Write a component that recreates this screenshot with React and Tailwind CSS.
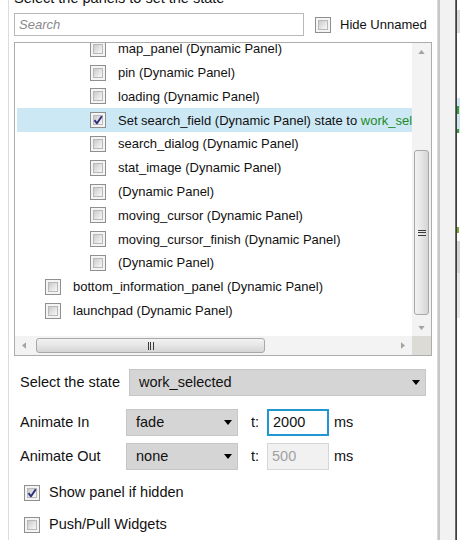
import React from 'react';

const rows = [
    { level: 2, name: 'map_panel (Dynamic Panel)' },
    { level: 2, name: 'pin (Dynamic Panel)' },
    { level: 2, name: 'loading (Dynamic Panel)' },
    { level: 2, name: 'Set search_field (Dynamic Panel) state to ', extra: 'work_selected', checked: true, selected: true },
    { level: 2, name: 'search_dialog (Dynamic Panel)' },
    { level: 2, name: 'stat_image (Dynamic Panel)' },
    { level: 2, name: '(Dynamic Panel)' },
    { level: 2, name: 'moving_cursor (Dynamic Panel)' },
    { level: 2, name: 'moving_cursor_finish (Dynamic Panel)' },
    { level: 2, name: '(Dynamic Panel)' },
    { level: 1, name: 'bottom_information_panel (Dynamic Panel)' },
    { level: 1, name: 'launchpad (Dynamic Panel)' },
];

function CheckBox({ checked }) {
    return (
        <div className="w-[16px] h-[16px] shrink-0 border border-[#8e8f8f] bg-[#f4f4f4] p-[2px]">
            <div className="relative w-full h-full border border-[#b9b9b9] bg-gradient-to-br from-[#c9c9c9] via-[#e2e2e2] to-[#f8f8f8]">
                {checked && (
                    <svg viewBox="0 0 10 10" className="absolute -left-[1px] -top-[1px] w-[10px] h-[10px]">
                        <path d="M1.5 5.2 L4 8.3 L8.8 1.2" fill="none" stroke="#2d2f7e" strokeWidth="1.9" strokeLinejoin="round" />
                    </svg>
                )}
            </div>
        </div>
    );
}

function Triangle({ dir, className }) {
    const pts = {
        up: '0,5 4,0 8,5',
        down: '0,0 8,0 4,5',
        left: '5,0 5,8 0,4',
        right: '0,0 0,8 5,4',
    }[dir];
    const box = dir === 'up' || dir === 'down' ? '0 0 8 5' : '0 0 5 8';
    return (
        <svg viewBox={box} className={className}>
            <polygon points={pts} fill="currentColor" />
        </svg>
    );
}

function Select({ value, width }) {
    return (
        <div className={`${width} h-[27px] flex items-center justify-between bg-[#d5d5d5] border border-[#c6c6c6] pl-[9px] pr-[5px]`}>
            <span>{value}</span>
            <Triangle dir="down" className="w-[8px] h-[5px] text-black" />
        </div>
    );
}

export default function App() {
    return (
        <div className="w-[460px] h-[540px] overflow-hidden bg-white flex font-['Liberation_Sans',Arial,sans-serif] text-[#111]">
            {/* left gutter */}
            <div className="w-[9px] shrink-0 bg-white border-r border-[#dcdcdc]"></div>

            {/* main panel */}
            <div className="w-[428px] shrink-0 pl-[5px]">
                <div className="h-[13px] overflow-hidden">
                    <div className="relative -top-[10px] text-[14.5px] leading-[17px] whitespace-nowrap">Select the panels to set the state</div>
                </div>

                <div className="flex items-center h-[23px]">
                    <div className="w-[290px] h-[23px] border border-[#b8b8b8] flex items-center pl-[4px]">
                        <span className="italic text-[13px] text-[#8a8a8a]">Search</span>
                    </div>
                    <div className="ml-[11px]"><CheckBox /></div>
                    <span className="ml-[9px] text-[13px]">Hide Unnamed</span>
                </div>

                {/* tree list */}
                <div className="mt-[6px] w-[418px] h-[314px] border border-[#acacac] flex flex-col">
                    <div className="flex h-[293px]">
                        <div className="flex-1 overflow-hidden pl-[2px] text-[13px]">
                            <div className="relative -top-[6px]">
                                {rows.map((r, i) => (
                                    <div
                                        key={i}
                                        className={`h-[23.8px] flex items-center whitespace-nowrap ${r.selected ? 'bg-[#cce8f5]' : ''} ${r.level === 2 ? 'pl-[73px]' : 'pl-[28px]'}`}
                                    >
                                        <CheckBox checked={r.checked} />
                                        <span className="ml-[12px]">
                                            {r.name}
                                            {r.extra && <span className="text-[#1f8a1f]">{r.extra}</span>}
                                        </span>
                                    </div>
                                ))}
                            </div>
                        </div>
                        {/* vertical scrollbar */}
                        <div className="w-[19px] bg-[#f3f3f3] flex flex-col items-center">
                            <div className="h-[17px] flex items-center justify-center">
                                <Triangle dir="up" className="w-[7px] h-[4px] text-[#a3a3a3]" />
                            </div>
                            <div className="flex-1 w-full px-[2px]">
                                <div className="mt-[90px] h-[165px] rounded-[3px] border border-[#a8a8a8] bg-gradient-to-r from-[#f2f2f2] via-[#e6e6e6] to-[#d4d4d4] flex flex-col items-center justify-center gap-[1.5px]">
                                    <div className="w-[8px] h-[1px] bg-[#3a3a3a]"></div>
                                    <div className="w-[8px] h-[1px] bg-[#3a3a3a]"></div>
                                    <div className="w-[8px] h-[1px] bg-[#3a3a3a]"></div>
                                </div>
                            </div>
                            <div className="h-[17px] flex items-center justify-center">
                                <Triangle dir="down" className="w-[7px] h-[4px] text-[#a3a3a3]" />
                            </div>
                        </div>
                    </div>
                    <div className="flex h-[19px]">
                        {/* horizontal scrollbar */}
                        <div className="flex-1 bg-[#f3f3f3] flex items-center">
                            <div className="w-[18px] flex items-center justify-center">
                                <Triangle dir="left" className="w-[4px] h-[7px] text-[#a3a3a3]" />
                            </div>
                            <div className="ml-[3px] w-[229px] h-[15px] rounded-[3px] border border-[#a8a8a8] bg-gradient-to-b from-[#f2f2f2] via-[#e6e6e6] to-[#d4d4d4] flex items-center justify-center gap-[1.5px]">
                                <div className="w-[1px] h-[8px] bg-[#3a3a3a]"></div>
                                <div className="w-[1px] h-[8px] bg-[#3a3a3a]"></div>
                                <div className="w-[1px] h-[8px] bg-[#3a3a3a]"></div>
                            </div>
                            <div className="flex-1"></div>
                            <div className="w-[18px] flex items-center justify-center">
                                <Triangle dir="right" className="w-[4px] h-[7px] text-[#a3a3a3]" />
                            </div>
                        </div>
                        <div className="w-[19px] bg-[#dddbd5]"></div>
                    </div>
                </div>

                {/* state options */}
                <div className="text-[14.5px] pl-[6px]">
                    <div className="mt-[13px] flex items-center h-[27px]">
                        <span className="w-[109px]">Select the state</span>
                        <Select value="work_selected" width="w-[297px]" />
                    </div>
                    <div className="mt-[13px] flex items-center h-[27px]">
                        <span className="w-[106px]">Animate In</span>
                        <Select value="fade" width="w-[112px]" />
                        <span className="ml-[13px] w-[16px]">t:</span>
                        <div className="w-[62px] h-[27px] border-2 border-[#2196d3] flex items-center pl-[4px]">2000</div>
                        <span className="ml-[5px]">ms</span>
                    </div>
                    <div className="mt-[7px] flex items-center h-[27px]">
                        <span className="w-[106px]">Animate Out</span>
                        <Select value="none" width="w-[112px]" />
                        <span className="ml-[13px] w-[16px]">t:</span>
                        <div className="w-[62px] h-[27px] border border-[#d6d6d6] bg-[#f1f1f1] text-[#a2a2a2] flex items-center pl-[4px]">500</div>
                        <span className="ml-[5px]">ms</span>
                    </div>
                    <div className="mt-[15px] flex items-center h-[16px] pl-[4px]">
                        <CheckBox checked />
                        <span className="ml-[9px]">Show panel if hidden</span>
                    </div>
                    <div className="mt-[16px] flex items-center h-[16px] pl-[4px]">
                        <CheckBox />
                        <span className="ml-[9px]">Push/Pull Widgets</span>
                    </div>
                </div>
            </div>

            {/* splitter */}
            <div className="w-[1px] bg-[#d9d9d9]"></div>
            <div className="w-[2px] bg-[#c7c7c7]"></div>
            <div className="w-[15px] bg-[#f2f2f2]"></div>
            <div className="w-[1px] bg-[#6b6b6b]"></div>
            <div className="w-[1px] bg-[#3f3f3f]"></div>

            {/* neighbouring panel fragment */}
            <div className="flex-1 flex flex-col bg-white">
                <div className="h-[10px]"></div>
                <div className="h-[23px] bg-[#dcdcdc]"></div>
                <div className="h-[65px]"></div>
                <div className="h-[35px] bg-[#cce8f5] flex flex-col pt-[8px] gap-[15px]">
                    <div className="w-[2px] h-[8px] bg-[#3a9a3a]"></div>
                    <div className="w-[2px] h-[4px] bg-[#3a9a3a]"></div>
                </div>
                <div className="h-[94px]"></div>
                <div className="w-[2px] h-[6px] bg-[#7aa830]"></div>
                <div className="h-[8px]"></div>
                <div className="h-[32px] bg-[#d6d6d6]"></div>
                <div className="h-[45px] bg-[#e8e8e8]"></div>
            </div>
        </div>
    );
}
